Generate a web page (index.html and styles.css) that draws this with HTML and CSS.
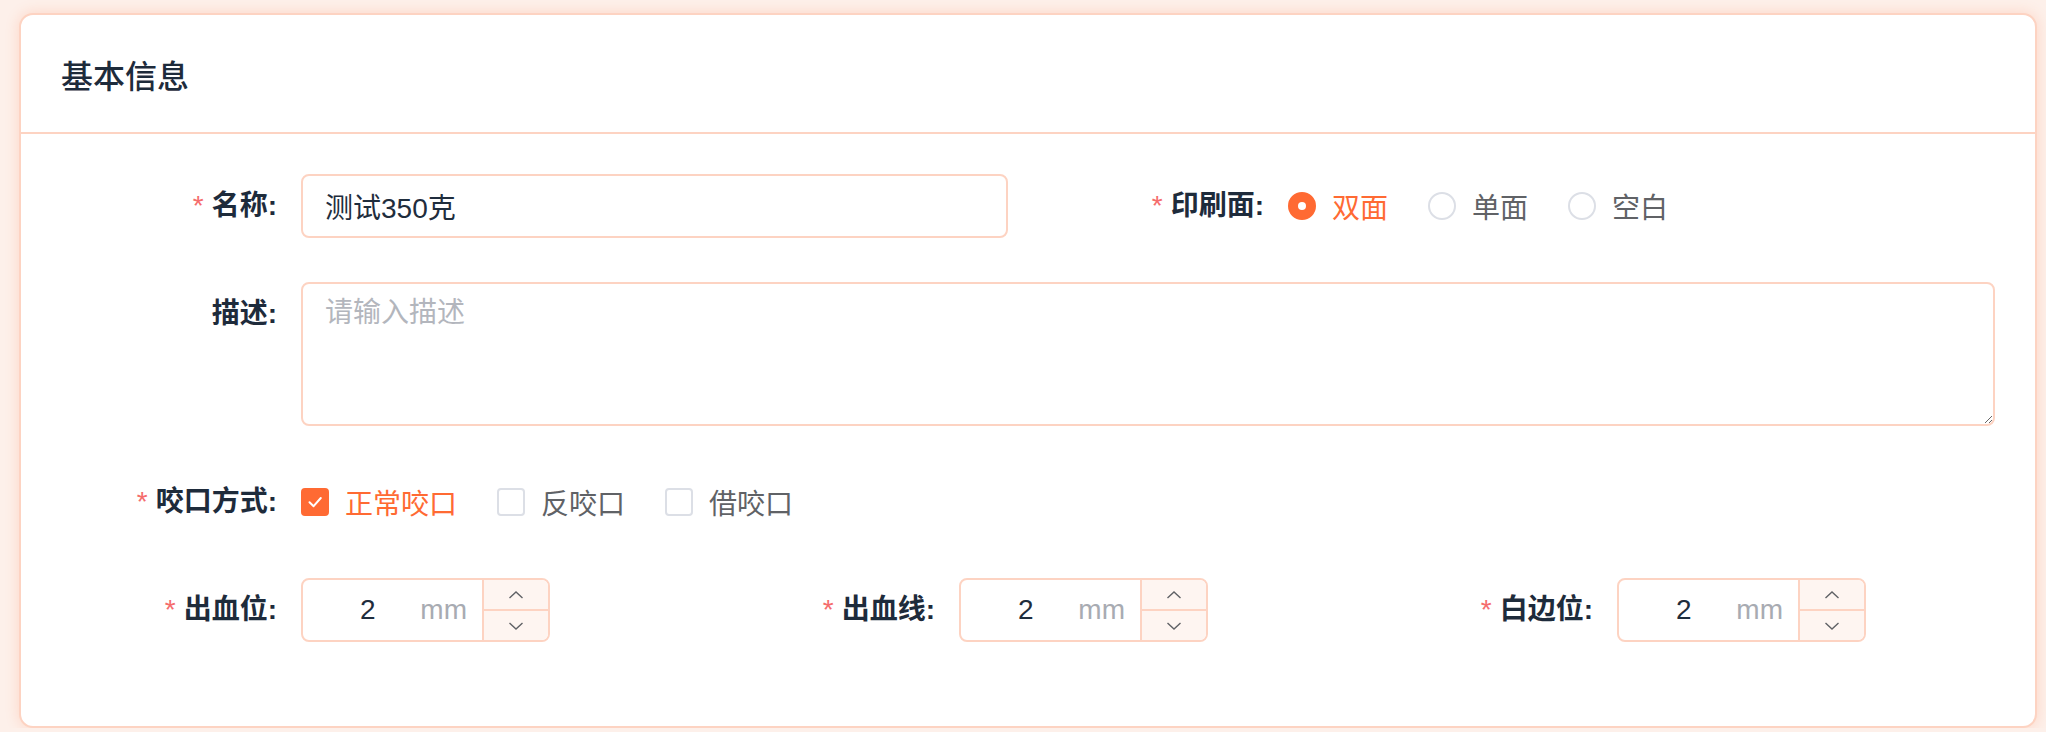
FILE: index.html
```html
<!DOCTYPE html>
<html lang="zh-CN">
<head>
<meta charset="utf-8">
<title>基本信息</title>
<link rel="stylesheet" href="styles.css">
</head>
<body>
<div class="page">
  <div class="card">
    <div class="card-header">基本信息</div>
    <div class="card-body">
      <form class="form">
        <div class="row row-2">
          <div class="form-item">
            <label class="label required">名称:</label>
            <div class="control">
              <input class="input" type="text" value="测试350克">
            </div>
          </div>
          <div class="form-item">
            <label class="label required">印刷面:</label>
            <div class="control options">
              <span class="radio checked"><span class="radio-dot"></span><span class="opt-text">双面</span></span>
              <span class="radio"><span class="radio-dot"></span><span class="opt-text">单面</span></span>
              <span class="radio"><span class="radio-dot"></span><span class="opt-text">空白</span></span>
            </div>
          </div>
        </div>
        <div class="form-item">
          <label class="label">描述:</label>
          <div class="control">
            <textarea class="textarea" placeholder="请输入描述"></textarea>
          </div>
        </div>
        <div class="form-item">
          <label class="label required">咬口方式:</label>
          <div class="control options">
            <span class="checkbox checked"><span class="box"><svg viewBox="0 0 28 28" width="28" height="28"><path d="M8.5 14.2 L12.6 18.2 L19.8 10" fill="none" stroke="#fff" stroke-width="2" stroke-linecap="round" stroke-linejoin="round"/></svg></span><span class="opt-text">正常咬口</span></span>
            <span class="checkbox"><span class="box"></span><span class="opt-text">反咬口</span></span>
            <span class="checkbox"><span class="box"></span><span class="opt-text">借咬口</span></span>
          </div>
        </div>
        <div class="row row-3">
          <div class="form-item">
            <label class="label required">出血位:</label>
            <div class="control">
              <div class="number">
                <div class="number-field"><span class="number-value">2</span><span class="suffix">mm</span></div>
                <div class="spin">
                  <span class="spin-btn"><svg viewBox="0 0 16 10" width="16" height="10"><path d="M1.5 8 L8 2 L14.5 8" fill="none" stroke="#606266" stroke-width="1.4"/></svg></span>
                  <span class="spin-btn"><svg viewBox="0 0 16 10" width="16" height="10"><path d="M1.5 2 L8 8 L14.5 2" fill="none" stroke="#606266" stroke-width="1.4"/></svg></span>
                </div>
              </div>
            </div>
          </div>
          <div class="form-item">
            <label class="label required">出血线:</label>
            <div class="control">
              <div class="number">
                <div class="number-field"><span class="number-value">2</span><span class="suffix">mm</span></div>
                <div class="spin">
                  <span class="spin-btn"><svg viewBox="0 0 16 10" width="16" height="10"><path d="M1.5 8 L8 2 L14.5 8" fill="none" stroke="#606266" stroke-width="1.4"/></svg></span>
                  <span class="spin-btn"><svg viewBox="0 0 16 10" width="16" height="10"><path d="M1.5 2 L8 8 L14.5 2" fill="none" stroke="#606266" stroke-width="1.4"/></svg></span>
                </div>
              </div>
            </div>
          </div>
          <div class="form-item">
            <label class="label required">白边位:</label>
            <div class="control">
              <div class="number">
                <div class="number-field"><span class="number-value">2</span><span class="suffix">mm</span></div>
                <div class="spin">
                  <span class="spin-btn"><svg viewBox="0 0 16 10" width="16" height="10"><path d="M1.5 8 L8 2 L14.5 8" fill="none" stroke="#606266" stroke-width="1.4"/></svg></span>
                  <span class="spin-btn"><svg viewBox="0 0 16 10" width="16" height="10"><path d="M1.5 2 L8 8 L14.5 2" fill="none" stroke="#606266" stroke-width="1.4"/></svg></span>
                </div>
              </div>
            </div>
          </div>
        </div>
      </form>
    </div>
  </div>
</div>
</body>
</html>
```

FILE: styles.css
```css
* { box-sizing: border-box; }

html, body {
  margin: 0;
  padding: 0;
  background: #fdf0ea;
  font-family: "Liberation Sans", "Noto Sans CJK SC", sans-serif;
  color: #1f2d3d;
}

.page {
  padding: 13px 9px 0 19px;
}

.card {
  background: #fff;
  border: 2px solid #fdd3c2;
  border-radius: 14px;
  box-shadow: 0 0 14px rgba(255, 120, 70, 0.22);
}

.card-header {
  height: 119px;
  display: flex;
  align-items: center;
  padding: 0 40px;
  font-size: 32px;
  font-weight: 500;
  color: #1e2b3b;
  border-bottom: 2px solid #fdd3c2;
}

.card-body {
  padding: 40px 40px 40px;
}

.form { margin: 0; }

.row {
  display: grid;
  column-gap: 40px;
}
.row-2 { grid-template-columns: 1fr 1fr; }
.row-3 { grid-template-columns: 1fr 1fr 1fr; }

.form-item {
  display: flex;
  align-items: flex-start;
  margin-bottom: 44px;
}

.label {
  flex: 0 0 240px;
  width: 240px;
  padding-right: 24px;
  text-align: right;
  font-size: 28px;
  line-height: 64px;
  font-weight: 700;
  color: #1e2b3b;
}

.label.required::before {
  content: "*";
  color: #f56c6c;
  margin-right: 8px;
  font-weight: 400;
}

.control {
  flex: 1;
  min-width: 0;
}

.input {
  display: block;
  width: 100%;
  height: 64px;
  border: 2px solid #fdd3c2;
  border-radius: 8px;
  padding: 0 22px;
  font-family: inherit;
  font-size: 28px;
  color: #1f2d3d;
  background: #fff;
  outline: none;
}

.textarea {
  display: block;
  width: 100%;
  height: 144px;
  border: 2px solid #fdd3c2;
  border-radius: 8px;
  padding: 8px 22px;
  font-family: inherit;
  font-size: 28px;
  line-height: 42px;
  color: #1f2d3d;
  background: #fff;
  outline: none;
  resize: vertical;
}
.textarea::placeholder { color: #b3b6bd; }

.options {
  display: flex;
  align-items: center;
  height: 64px;
}

.radio, .checkbox {
  display: inline-flex;
  align-items: center;
  margin-right: 40px;
  font-size: 28px;
  color: #606266;
}

.opt-text { padding-left: 16px; }

.radio.checked .opt-text,
.checkbox.checked .opt-text { color: #ff6a33; }

.radio-dot {
  width: 28px;
  height: 28px;
  border-radius: 50%;
  border: 2px solid #dcdfe6;
  background: #fff;
  display: inline-flex;
  align-items: center;
  justify-content: center;
}
.radio.checked .radio-dot {
  border-color: #ff6a33;
  background: #ff6a33;
}
.radio.checked .radio-dot::after {
  content: "";
  width: 8px;
  height: 8px;
  border-radius: 50%;
  background: #fff;
}

.box {
  width: 28px;
  height: 28px;
  border-radius: 4px;
  border: 2px solid #dcdfe6;
  background: #fff;
  display: inline-flex;
  align-items: center;
  justify-content: center;
}
.checkbox.checked .box {
  background: #ff6a33;
  border-color: #ff6a33;
}
.box svg { display: block; flex: none; }

.number {
  display: flex;
  width: 249px;
  height: 64px;
  border: 2px solid #fdd3c2;
  border-radius: 8px;
  overflow: hidden;
  background: #fff;
}

.number-field {
  flex: 1;
  display: flex;
  align-items: center;
  padding: 0 15px 0 22px;
  font-size: 28px;
}

.number-value {
  flex: 1;
  text-align: center;
  color: #1f2d3d;
}

.suffix {
  margin-left: 10px;
  color: #a8abb2;
}

.spin {
  flex: 0 0 66px;
  display: flex;
  flex-direction: column;
  border-left: 2px solid #fdd3c2;
  background: #fef5f1;
}

.spin-btn {
  flex: 1;
  display: flex;
  align-items: center;
  justify-content: center;
}
.spin-btn + .spin-btn { border-top: 2px solid #fdd3c2; }
.spin-btn svg { display: block; }
```
